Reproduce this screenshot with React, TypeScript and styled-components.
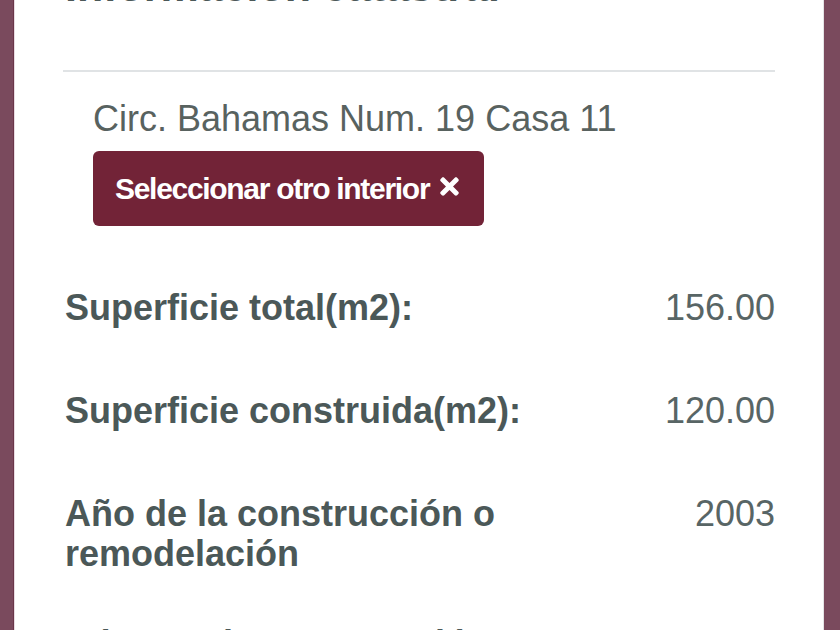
import React from "react";
import styled, { createGlobalStyle } from "styled-components";
import { FaTimes } from "react-icons/fa";

const Global = createGlobalStyle`
  html, body {
    margin: 0;
    padding: 0;
    height: 630px;
    overflow: hidden;
    background: #7a4a5d;
  }
  #root { height: 630px; }
`;

const Page = styled.div`
  display: flex;
  height: 630px;
  padding: 0 16px 0 14px;
  box-sizing: border-box;
  background: #7a4a5d;
  font-family: "Liberation Sans", Arial, sans-serif;
`;

const Panel = styled.section`
  flex: 1;
  background: #ffffff;
  border-left: 1px solid #e9dce2;
  border-right: 1px solid #e4e4e6;
  box-shadow: -1px 0 0 #6a3649;
  padding: 0 48px 0 48px;
  overflow: hidden;
`;

const Heading = styled.h2`
  margin: -37px 0 0 2px;
  font-size: 43px;
  line-height: 47px;
  font-weight: 700;
  color: #4b5858;
`;

const Divider = styled.hr`
  margin: 60px 0 0 0;
  border: 0;
  height: 2px;
  background: #e0e3e5;
`;

const AddressBlock = styled.div`
  padding: 27px 0 0 30px;
  display: flex;
  flex-direction: column;
  align-items: flex-start;
  gap: 12px;
`;

const Address = styled.div`
  font-size: 36px;
  line-height: 40px;
  color: #58625f;
`;

const PrimaryButton = styled.button`
  display: inline-flex;
  align-items: center;
  gap: 7px;
  height: 75px;
  padding: 0 21px 0 22px;
  border: 0;
  border-radius: 6px;
  background: #722337;
  color: #ffffff;
  font-family: "Liberation Sans", Arial, sans-serif;
  font-size: 30px;
  font-weight: 700;
  letter-spacing: -1.3px;
  cursor: pointer;
  svg {
    width: 27px;
    height: 27px;
    margin-top: -5px;
  }
`;

const Details = styled.div`
  margin-top: 39px;
  display: flex;
  flex-direction: column;
`;

const Row = styled.div`
  display: flex;
  justify-content: space-between;
  align-items: flex-start;
  gap: 24px;
  padding: 23px 0 27px 2px;
  min-height: 53px;
`;

const Label = styled.div`
  font-size: 36px;
  line-height: 40px;
  font-weight: 700;
  color: #4b5858;
  max-width: 470px;
`;

const Value = styled.div`
  font-size: 36px;
  line-height: 40px;
  color: #586565;
  text-align: right;
  white-space: nowrap;
`;

const rows = [
  { label: "Superficie total(m2):", value: "156.00" },
  { label: "Superficie construida(m2):", value: "120.00" },
  { label: "Año de la construcción o remodelación", value: "2003" },
  { label: "Número de construcción", value: "11" },
];

export default function App() {
  return (
    <>
      <Global />
      <Page>
        <Panel>
          <Heading>Información catastral</Heading>
          <Divider />
          <AddressBlock>
            <Address>Circ. Bahamas Num. 19 Casa 11</Address>
            <PrimaryButton>
              Seleccionar otro interior <FaTimes />
            </PrimaryButton>
          </AddressBlock>
          <Details>
            {rows.map((r) => (
              <Row key={r.label}>
                <Label>{r.label}</Label>
                <Value>{r.value}</Value>
              </Row>
            ))}
          </Details>
        </Panel>
      </Page>
    </>
  );
}
